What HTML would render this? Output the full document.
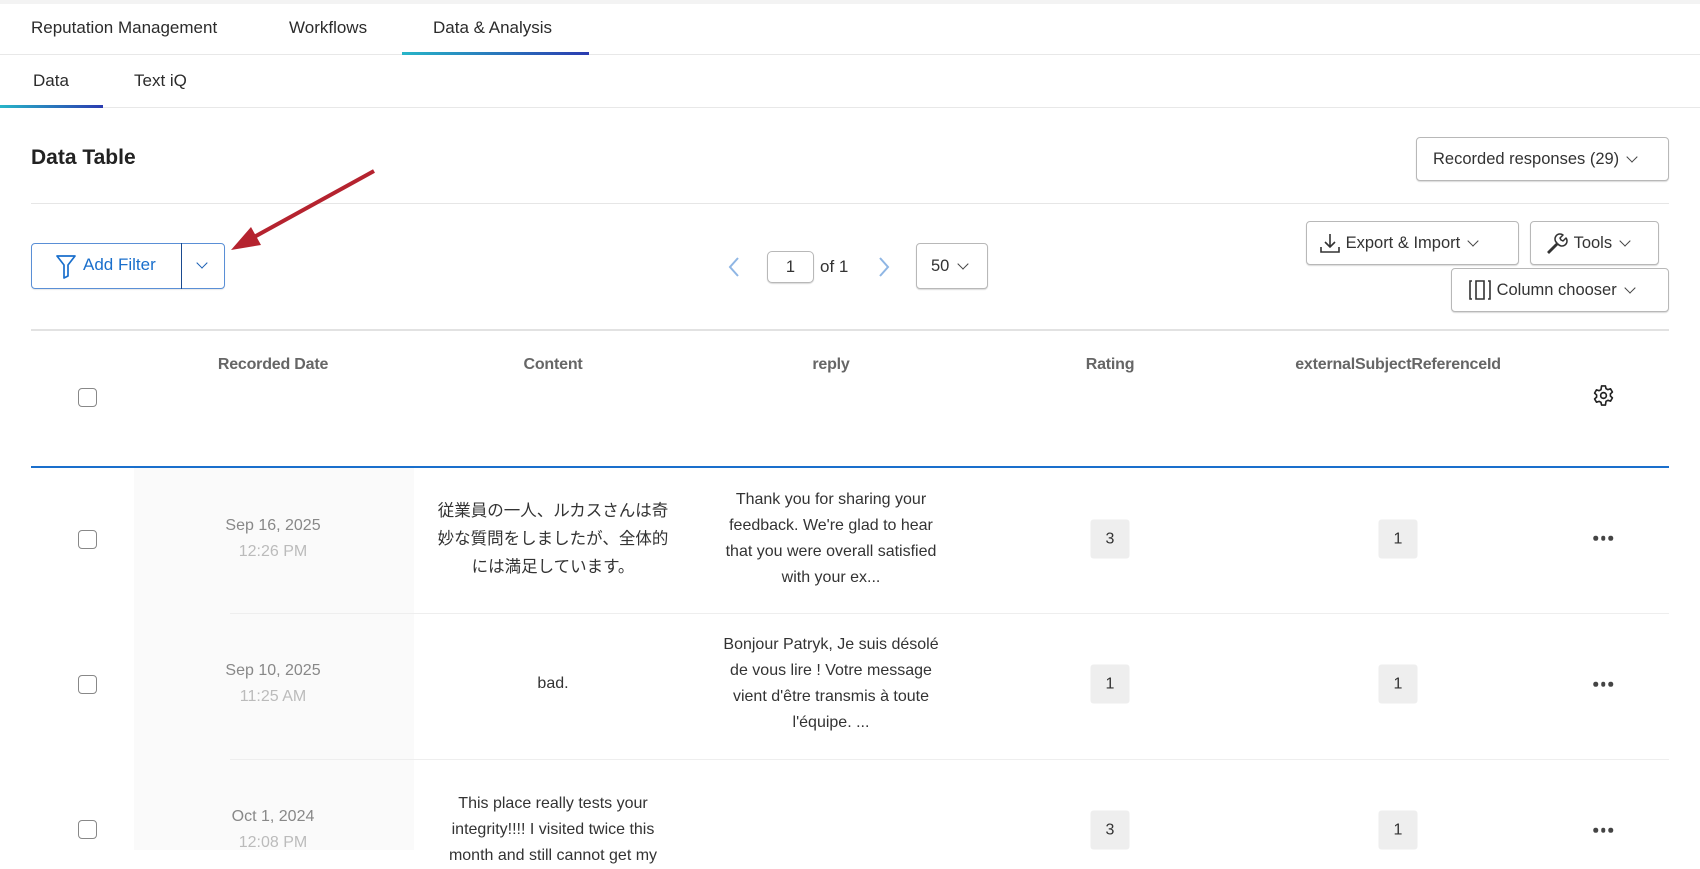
<!DOCTYPE html>
<html><head><meta charset="utf-8"><style>
body{margin:0;width:1700px;height:850px;overflow:hidden;background:#fff;font-family:"Liberation Sans","Noto Sans CJK JP",sans-serif;color:#333;position:relative}
.a{position:absolute}
.t{font-size:16px;color:#2b2b2b;white-space:nowrap}
.btn{position:absolute;border:1px solid #b8b8b8;border-radius:4px;background:#fff;box-sizing:border-box;display:flex;align-items:center;font-size:16.5px;color:#333;box-shadow:0 1px 1px rgba(0,0,0,.15)}
.chev{display:inline-block;width:7px;height:7px;border-right:1.6px solid #444;border-bottom:1.6px solid #444;transform:rotate(45deg);margin-top:-5px}
.hd{position:absolute;top:356px;font-size:16px;font-weight:bold;color:#666;transform:translateX(-50%);white-space:nowrap;letter-spacing:-0.2px}
.cb{position:absolute;left:78px;width:19px;height:19px;border:1.5px solid #888;border-radius:4px;box-sizing:border-box}
.cell{position:absolute;transform:translate(-50%,-50%);text-align:center;font-size:16px;line-height:26px;color:#333}
.badge{position:absolute;width:39px;height:39px;background:#eee;border-radius:3px;transform:translate(-50%,-50%);display:flex;align-items:center;justify-content:center;font-size:16px;color:#333}
.dots{position:absolute;transform:translate(-50%,-50%);display:flex;gap:3px}
.dots i{width:4.5px;height:4.5px;border-radius:50%;background:#444;display:block}
.rowline{position:absolute;left:230px;width:1439px;height:1px;background:#eee}
</style></head><body>
<div class="a" style="left:0;top:0;width:1700px;height:4px;background:#f3f3f3"></div>
<div class="a t" style="left:31px;top:18px;font-size:17px">Reputation Management</div>
<div class="a t" style="left:289px;top:18px;font-size:17px">Workflows</div>
<div class="a t" style="left:433px;top:18px;font-size:17px">Data &amp; Analysis</div>
<div class="a" style="left:0;top:54px;width:1700px;height:1px;background:#e8e8e8"></div>
<div class="a" style="left:402px;top:52px;width:187px;height:3px;background:linear-gradient(90deg,#28b5c8,#2a3bb0)"></div>
<div class="a t" style="left:33px;top:71px;font-size:17px">Data</div>
<div class="a t" style="left:134px;top:71px;font-size:17px">Text iQ</div>
<div class="a" style="left:0;top:107px;width:1700px;height:1px;background:#e8e8e8"></div>
<div class="a" style="left:0;top:105px;width:103px;height:3px;background:linear-gradient(90deg,#28b5c8,#2a3bb0)"></div>
<div class="a" style="left:31px;top:146px;font-size:21px;font-weight:bold;color:#222">Data Table</div>
<div class="btn" style="left:1416px;top:137px;width:253px;height:44px;padding-left:16px">Recorded responses (29)&nbsp;&nbsp;<span class="chev"></span></div>
<div class="a" style="left:31px;top:203px;width:1638px;height:1px;background:#e6e6e6"></div>
<div class="a" style="left:31px;top:243px;width:194px;height:46px;border:1px solid #5a8fd6;border-radius:4px;box-sizing:border-box;box-shadow:0 1px 1px rgba(0,0,0,.1)"></div>
<div class="a" style="left:181px;top:243px;width:1px;height:46px;background:#1a4a8f"></div>
<svg class="a" style="left:55px;top:254px" width="22" height="25" viewBox="0 0 22 25"><path d="M2 2h18l-7 9v11l-4 2V11z" fill="none" stroke="#1a6fcc" stroke-width="1.7" stroke-linejoin="round"/></svg>
<div class="a" style="left:83px;top:255px;font-size:17px;color:#1a6fcc">Add Filter</div>
<span class="a chev" style="left:198px;top:264px;border-color:#1a5fb4"></span>
<svg class="a" style="left:225px;top:165px" width="155" height="90"><line x1="149" y1="6" x2="20" y2="77" stroke="#b5232f" stroke-width="4"/><polygon points="6,85 26,62 36,80" fill="#b5232f"/></svg>
<svg class="a" style="left:727px;top:256px" width="14" height="22"><path d="M11 2L3 11l8 9" fill="none" stroke="#8fb6e4" stroke-width="2"/></svg>
<div class="btn" style="left:767px;top:251px;width:47px;height:32px;justify-content:center;border-radius:5px">1</div>
<div class="a" style="left:820px;top:257px;font-size:17px;color:#333">of 1</div>
<svg class="a" style="left:877px;top:256px" width="14" height="22"><path d="M3 2l8 9-8 9" fill="none" stroke="#8fb6e4" stroke-width="2"/></svg>
<div class="btn" style="left:916px;top:243px;width:72px;height:46px;padding-left:14px">50&nbsp;&nbsp;<span class="chev"></span></div>
<div class="btn" style="left:1306px;top:221px;width:213px;height:44px;padding-left:12px"><svg width="22" height="22" viewBox="0 0 22 22"><path d="M11 2v12M6 10l5 5 5-5M2 15v5h18v-5" fill="none" stroke="#333" stroke-width="1.6"/></svg>&nbsp;Export &amp; Import&nbsp;&nbsp;<span class="chev"></span></div>
<div class="btn" style="left:1530px;top:221px;width:129px;height:44px;padding-left:14px"><svg width="24" height="24" viewBox="0 0 24 24"><path d="M3 21l9-9a5 5 0 0 1 6-8l-3 3 1 2 2 1 3-3a5 5 0 0 1-8 6l-9 9z" fill="none" stroke="#333" stroke-width="1.5" stroke-linejoin="round"/></svg>&nbsp;Tools&nbsp;&nbsp;<span class="chev"></span></div>
<div class="btn" style="left:1451px;top:268px;width:218px;height:44px;padding-left:16px"><svg width="24" height="24" viewBox="0 0 24 24"><path d="M4 3H2v18h2M20 3h2v18h-2M8 3h8v18H8z" fill="none" stroke="#333" stroke-width="1.6"/></svg>&nbsp;Column chooser&nbsp;&nbsp;<span class="chev"></span></div>
<div class="a" style="left:31px;top:329px;width:1638px;height:2px;background:#e2e2e2"></div>
<div class="hd" style="left:273px">Recorded Date</div>
<div class="hd" style="left:553px">Content</div>
<div class="hd" style="left:831px">reply</div>
<div class="hd" style="left:1110px">Rating</div>
<div class="hd" style="left:1398px">externalSubjectReferenceId</div>
<div class="cb" style="top:388px"></div>
<svg class="a" style="left:1592px;top:384px" width="23" height="23" viewBox="0 0 24 24"><path d="M10 2h4l.6 2.8 2 1.1 2.7-.9 2 3.4-2.1 1.9v2.3l2.1 1.9-2 3.4-2.7-.9-2 1.1L14 22h-4l-.6-2.8-2-1.1-2.7.9-2-3.4 2.1-1.9V11.4L2.7 9.5l2-3.4 2.7.9 2-1.1z" fill="none" stroke="#222" stroke-width="1.7" stroke-linejoin="round"/><circle cx="12" cy="12" r="3" fill="none" stroke="#222" stroke-width="1.7"/></svg>
<div class="a" style="left:31px;top:466px;width:1638px;height:2px;background:#1a6fcc"></div>
<div class="a" style="left:134px;top:468px;width:280px;height:382px;background:#fafafa"></div>
<div class="cb" style="top:530px"></div>
<div class="cell" style="left:273px;top:539px;color:#888">Sep 16, 2025<br><span style="color:#bbb">12:26 PM</span></div>
<div class="cell" style="left:553px;top:539px;width:260px;font-size:16.5px;line-height:28px;white-space:nowrap">従業員の一人、ルカスさんは奇<br>妙な質問をしましたが、全体的<br>には満足しています。</div>
<div class="cell" style="left:831px;top:539px;width:228px">Thank you for sharing your feedback. We're glad to hear that you were overall satisfied with your ex...</div>
<div class="badge" style="left:1110px;top:539px">3</div>
<div class="badge" style="left:1398px;top:539px">1</div>
<div class="dots" style="left:1603px;top:538px"><i></i><i></i><i></i></div>
<div class="rowline" style="top:613px"></div>
<div class="cb" style="top:675px"></div>
<div class="cell" style="left:273px;top:684px;color:#888">Sep 10, 2025<br><span style="color:#bbb">11:25 AM</span></div>
<div class="cell" style="left:553px;top:684px">bad.</div>
<div class="cell" style="left:831px;top:684px;width:228px">Bonjour Patryk, Je suis désolé de vous lire ! Votre message vient d'être transmis à toute l'équipe. ...</div>
<div class="badge" style="left:1110px;top:684px">1</div>
<div class="badge" style="left:1398px;top:684px">1</div>
<div class="dots" style="left:1603px;top:684px"><i></i><i></i><i></i></div>
<div class="rowline" style="top:759px"></div>
<div class="cb" style="top:820px"></div>
<div class="cell" style="left:273px;top:830px;color:#888">Oct 1, 2024<br><span style="color:#bbb">12:08 PM</span></div>
<div class="cell" style="left:553px;top:830px;width:236px">This place really tests your integrity!!!! I visited twice this month and still cannot get my</div>
<div class="badge" style="left:1110px;top:830px">3</div>
<div class="badge" style="left:1398px;top:830px">1</div>
<div class="dots" style="left:1603px;top:830px"><i></i><i></i><i></i></div>
</body></html>
